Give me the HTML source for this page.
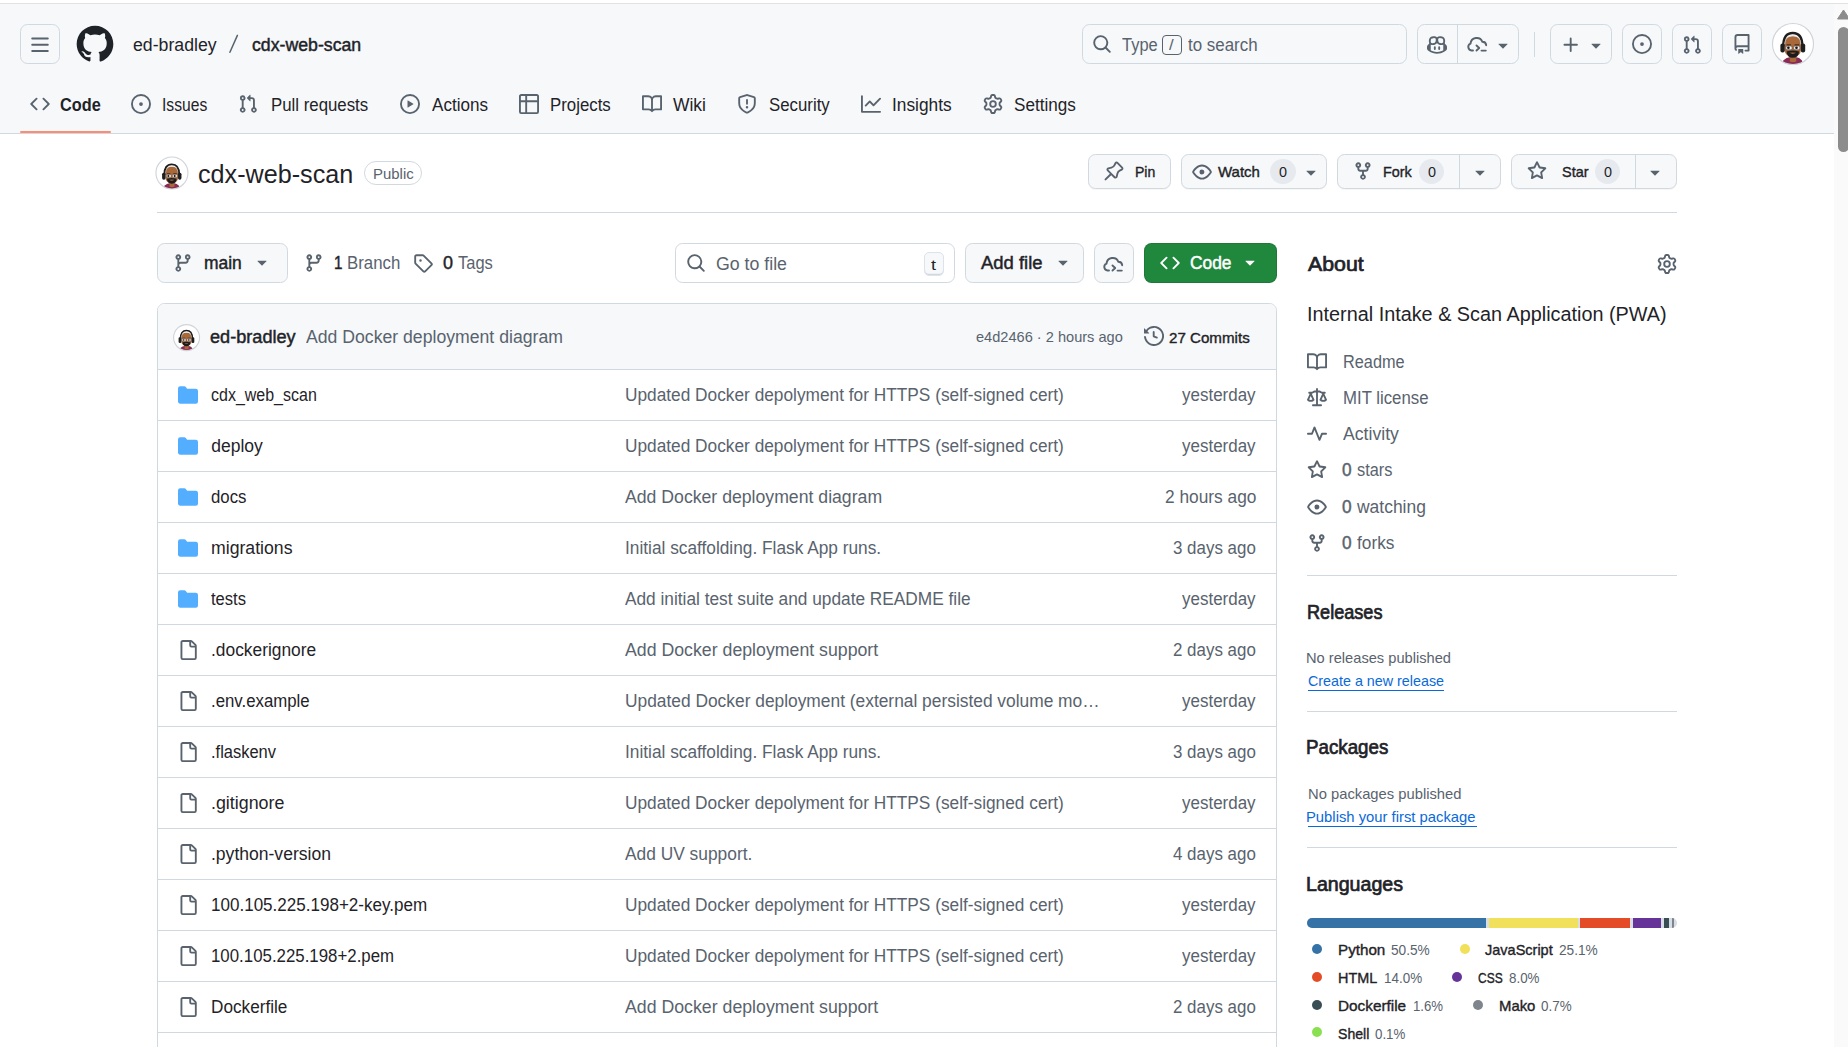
<!DOCTYPE html>
<html><head><meta charset="utf-8"><title>cdx-web-scan</title>
<style>
html,body{margin:0;padding:0;}
body{width:1848px;height:1047px;overflow:hidden;position:relative;background:#fff;font-family:"Liberation Sans",sans-serif;}
.t{position:absolute;white-space:nowrap;line-height:1;}
</style></head><body>
<div style="position:absolute;left:0px;top:3px;width:1848px;height:1px;background:#e1e3e1"></div>
<div style="position:absolute;left:0px;top:4px;width:1834px;height:129px;background:#f6f8fa;border-radius:0px;box-sizing:border-box;"></div>
<div style="position:absolute;left:0px;top:133px;width:1834px;height:1px;background:#d1d9e0"></div>
<div style="position:absolute;left:1834px;top:4px;width:14px;height:1043px;background:#fafafa;border-radius:0px;box-sizing:border-box;"></div>
<svg style="position:absolute;left:1834px;top:0px;overflow:visible" width="14" height="30" viewBox="0 0 14 30"><path d="M3.5 19 L9.5 10 L15.5 19 Z" fill="#8c8c8c" stroke="#8c8c8c" stroke-width="1" stroke-linejoin="round"/></svg>
<div style="position:absolute;left:1838px;top:27px;width:11px;height:125px;background:#8c8c8c;border-radius:5.5px;box-sizing:border-box;"></div>
<div style="position:absolute;left:20px;top:24px;width:40px;height:40px;background:transparent;border:1px solid #d1d9e0;border-radius:7.5px;box-sizing:border-box;"></div>
<svg style="position:absolute;left:30px;top:35px" width="20" height="20" viewBox="0 0 16 16" fill="#59636e"><path d="M1 2.75A.75.75 0 0 1 1.75 2h12.5a.75.75 0 0 1 0 1.5H1.75A.75.75 0 0 1 1 2.75Zm0 5A.75.75 0 0 1 1.75 7h12.5a.75.75 0 0 1 0 1.5H1.75A.75.75 0 0 1 1 7.75ZM1.75 12h12.5a.75.75 0 0 1 0 1.5H1.75a.75.75 0 0 1 0-1.5Z"/></svg>
<svg style="position:absolute;left:75px;top:24px" width="40" height="40" viewBox="0 0 24 24" fill="#1f2328"><path d="M12 1C5.923 1 1 5.923 1 12c0 4.867 3.149 8.979 7.521 10.436.55.096.756-.233.756-.522 0-.262-.013-1.128-.013-2.049-2.764.509-3.479-.674-3.699-1.292-.124-.317-.66-1.293-1.127-1.554-.385-.207-.936-.715-.014-.729.866-.014 1.485.797 1.691 1.128.99 1.663 2.571 1.196 3.204.907.096-.715.385-1.196.701-1.471-2.448-.275-5.005-1.224-5.005-5.432 0-1.196.426-2.186 1.128-2.956-.111-.275-.496-1.402.11-2.915 0 0 .921-.288 3.024 1.128a10.193 10.193 0 0 1 2.75-.371c.936 0 1.871.123 2.75.371 2.104-1.43 3.025-1.128 3.025-1.128.605 1.513.221 2.64.111 2.915.701.77 1.127 1.747 1.127 2.956 0 4.222-2.571 5.157-5.019 5.432.399.344.743 1.004.743 2.035 0 1.471-.014 2.654-.014 3.112 0 .289.206.632.756.522C19.851 20.979 23 16.854 23 12c0-6.077-4.922-11-11-11Z"/></svg>
<svg style="position:absolute;left:225px;top:30px;overflow:visible" width="20" height="30" viewBox="0 0 20 30"><path d="M4.9 22.3 L12.4 5.4" stroke="#59636e" stroke-width="1.5" stroke-linecap="round"/></svg>
<div style="position:absolute;left:1082px;top:24px;width:325px;height:40px;background:#f6f8fa;border:1px solid #d1d9e0;border-radius:7.5px;box-sizing:border-box;"></div>
<svg style="position:absolute;left:1092px;top:34px" width="20" height="20" viewBox="0 0 16 16" fill="#59636e"><path d="M10.68 11.74a6 6 0 0 1-7.922-8.982 6 6 0 0 1 8.982 7.922l3.04 3.04a.749.749 0 0 1-.326 1.275.749.749 0 0 1-.734-.215ZM11.5 7a4.499 4.499 0 1 0-8.997 0A4.499 4.499 0 0 0 11.5 7Z"/></svg>
<div style="position:absolute;left:1162px;top:35px;width:20px;height:20px;background:transparent;border:1px solid #59636e;border-radius:4px;box-sizing:border-box;"></div>
<div style="position:absolute;left:1417px;top:24px;width:102px;height:40px;background:transparent;border:1px solid #d1d9e0;border-radius:7.5px;box-sizing:border-box;"></div>
<div style="position:absolute;left:1457px;top:24px;width:1px;height:40px;background:#d1d9e0"></div>
<svg style="position:absolute;left:1427px;top:35px" width="20" height="20" viewBox="0 0 16 16" fill="#59636e"><path d="M7.998 15.035c-4.562 0-7.873-2.914-7.998-3.749V9.338c.085-.628.677-1.686 1.588-2.065.013-.07.024-.143.036-.218.029-.183.06-.384.126-.612-.201-.508-.254-1.084-.254-1.656 0-.87.128-1.769.693-2.484.579-.733 1.494-1.124 2.724-1.261 1.206-.134 2.262.034 2.944.765.05.053.096.108.139.165.044-.057.094-.112.143-.165.682-.731 1.738-.899 2.944-.765 1.23.137 2.145.528 2.724 1.261.566.715.693 1.614.693 2.484 0 .572-.053 1.148-.254 1.656.066.228.098.429.126.612.012.076.024.148.037.218.924.385 1.522 1.471 1.591 2.095v1.872c0 .766-3.351 3.795-8.002 3.795Zm0-1.485c2.28 0 4.584-1.11 5.002-1.433V7.862l-.023-.116c-.49.21-1.075.291-1.727.291-1.146 0-2.059-.327-2.71-.991A3.222 3.222 0 0 1 8 6.303a3.24 3.24 0 0 1-.544.743c-.65.664-1.563.991-2.71.991-.652 0-1.236-.081-1.727-.291l-.023.116v4.255c.419.323 2.722 1.433 5.002 1.433ZM6.762 2.83c-.193-.206-.637-.413-1.682-.297-1.019.113-1.479.404-1.713.7-.247.312-.369.789-.369 1.554 0 .793.129 1.171.308 1.371.162.181.519.379 1.442.379.853 0 1.339-.235 1.638-.54.315-.322.527-.827.617-1.553.117-.935-.037-1.395-.241-1.614Zm4.155-.297c-1.044-.116-1.488.091-1.681.297-.204.219-.359.679-.242 1.614.091.726.303 1.231.618 1.553.299.305.784.54 1.638.54.922 0 1.28-.198 1.442-.379.179-.2.308-.578.308-1.371 0-.765-.123-1.242-.37-1.554-.233-.296-.693-.587-1.713-.7ZM6.25 9.037a.75.75 0 0 1 .75.75v1.501a.75.75 0 0 1-1.5 0V9.787a.75.75 0 0 1 .75-.75Zm4.25.75v1.501a.75.75 0 0 1-1.5 0V9.787a.75.75 0 0 1 1.5 0Z"/></svg>
<svg style="position:absolute;left:1467px;top:35px;overflow:visible" width="22" height="18" viewBox="0 0 22 18"><g fill="none" stroke="#59636e" stroke-width="1.9" stroke-linecap="round" stroke-linejoin="round"><path d="M6 15.5 H4.5 A3.6 3.6 0 0 1 3.5 8.6 A6.2 6.2 0 0 1 15.4 6.8 A3.8 3.8 0 0 1 19.2 10.2"/><path d="M9.5 10.5 L12.2 13 L9.5 15.5"/><path d="M14.5 15.6 H18.8"/></g></svg>
<svg style="position:absolute;left:1492.8px;top:34.7px" width="20" height="20" viewBox="0 0 16 16" fill="#59636e"><path d="m4.427 7.427 3.396 3.396a.25.25 0 0 0 .354 0l3.396-3.396A.25.25 0 0 0 11.396 7H4.604a.25.25 0 0 0-.177.427Z"/></svg>
<div style="position:absolute;left:1534px;top:32px;width:1px;height:25px;background:#d1d9e0"></div>
<div style="position:absolute;left:1550px;top:24px;width:62px;height:40px;background:transparent;border:1px solid #d1d9e0;border-radius:7.5px;box-sizing:border-box;"></div>
<svg style="position:absolute;left:1561px;top:35px" width="20" height="20" viewBox="0 0 16 16" fill="#59636e"><path d="M7.75 2a.75.75 0 0 1 .75.75V7h4.25a.75.75 0 0 1 0 1.5H8.5v4.25a.75.75 0 0 1-1.5 0V8.5H2.75a.75.75 0 0 1 0-1.5H7V2.75A.75.75 0 0 1 7.75 2Z"/></svg>
<svg style="position:absolute;left:1586px;top:34.7px" width="20" height="20" viewBox="0 0 16 16" fill="#59636e"><path d="m4.427 7.427 3.396 3.396a.25.25 0 0 0 .354 0l3.396-3.396A.25.25 0 0 0 11.396 7H4.604a.25.25 0 0 0-.177.427Z"/></svg>
<div style="position:absolute;left:1622px;top:24px;width:40px;height:40px;background:transparent;border:1px solid #d1d9e0;border-radius:7.5px;box-sizing:border-box;"></div>
<svg style="position:absolute;left:1632px;top:34px" width="20" height="20" viewBox="0 0 16 16" fill="#59636e"><path d="M8 9.5a1.5 1.5 0 1 0 0-3 1.5 1.5 0 0 0 0 3ZM8 0a8 8 0 1 1 0 16A8 8 0 0 1 8 0ZM1.5 8a6.5 6.5 0 1 0 13 0 6.5 6.5 0 0 0-13 0Z"/></svg>
<div style="position:absolute;left:1672px;top:24px;width:40px;height:40px;background:transparent;border:1px solid #d1d9e0;border-radius:7.5px;box-sizing:border-box;"></div>
<svg style="position:absolute;left:1682px;top:35px" width="20" height="20" viewBox="0 0 16 16" fill="#59636e"><path d="M1.5 3.25a2.25 2.25 0 1 1 3 2.122v5.256a2.251 2.251 0 1 1-1.5 0V5.372A2.25 2.25 0 0 1 1.5 3.25Zm5.677-.177L9.573.677A.25.25 0 0 1 10 .854V2.5h1A2.5 2.5 0 0 1 13.5 5v5.628a2.251 2.251 0 1 1-1.5 0V5a1 1 0 0 0-1-1h-1v1.646a.25.25 0 0 1-.427.177L7.177 3.427a.25.25 0 0 1 0-.354ZM3.75 2.5a.75.75 0 1 0 0 1.5.75.75 0 0 0 0-1.5Zm0 9.5a.75.75 0 1 0 0 1.5.75.75 0 0 0 0-1.5Zm8.25.75a.75.75 0 1 0 1.5 0 .75.75 0 0 0-1.5 0Z"/></svg>
<div style="position:absolute;left:1722px;top:24px;width:40px;height:40px;background:transparent;border:1px solid #d1d9e0;border-radius:7.5px;box-sizing:border-box;"></div>
<svg style="position:absolute;left:1732px;top:34px" width="20" height="20" viewBox="0 0 16 16" fill="#59636e"><path d="M2 2.5A2.5 2.5 0 0 1 4.5 0h8.75a.75.75 0 0 1 .75.75v12.5a.75.75 0 0 1-.75.75h-2.5a.75.75 0 0 1 0-1.5h1.75v-2h-8a1 1 0 0 0-.714 1.7.75.75 0 1 1-1.072 1.05A2.495 2.495 0 0 1 2 11.5Zm10.5-1h-8a1 1 0 0 0-1 1v6.708A2.486 2.486 0 0 1 4.5 9h8ZM5 12.25a.25.25 0 0 1 .25-.25h3.5a.25.25 0 0 1 .25.25v3.25a.25.25 0 0 1-.4.2l-1.45-1.087a.249.249 0 0 0-.3 0L5.4 15.7a.25.25 0 0 1-.4-.2Z"/></svg>
<svg style="position:absolute;left:1770.0px;top:21.0px;overflow:visible" width="46.0" height="46.0" viewBox="0 0 46 46"><defs><clipPath id="c1793_44"><circle cx="23" cy="23" r="20.5"/></clipPath></defs>
<circle cx="23" cy="23" r="20.5" fill="#fff"/>
<g clip-path="url(#c1793_44)">
<path d="M13.2 39.5 Q17 36 20 36.2 L26 36.2 Q29 36 32 39.5 L33 46 L12 46 Z" fill="#8b2a55"/>
<path d="M19.8 34 H26.3 V40.5 Q23 42 19.8 40.5 Z" fill="#a8683a"/>
<path d="M14.8 22 Q14.8 15.2 22.8 15.2 Q30.8 15.2 30.8 22 V29 Q30.8 35.5 22.8 35.5 Q14.8 35.5 14.8 29 Z" fill="#a8683a"/>
<path d="M16.6 30.5 Q22.8 28.5 29 30.5 Q28.8 36.8 22.8 36.8 Q16.8 36.8 16.6 30.5 Z M19.5 31.8 Q22.8 34 26.1 31.8 Q22.8 31 19.5 31.8 Z" fill="#1c1c1c" fill-rule="evenodd"/>
<path d="M13.3 25 Q13.3 12 22.8 12 Q32.3 12 32.3 25" fill="none" stroke="#1e1e1e" stroke-width="2.4"/>
<path d="M14.8 23 Q15.5 14.8 22.8 14.3 Q30 14.8 30.8 23" fill="none" stroke="#d8d8d8" stroke-width="0.6"/>
<rect x="10.4" y="22.6" width="4.4" height="9" rx="2" fill="#1e1e1e"/>
<rect x="30.8" y="22.6" width="4.4" height="9" rx="2" fill="#1e1e1e"/>
<path d="M16.6 23.8 H21 M24.6 23.8 H29.2" stroke="#3a2a1e" stroke-width="1"/>
<rect x="15.8" y="25" width="6.2" height="3.8" rx="1.2" fill="#eee" stroke="#5a4a40" stroke-width="0.6"/>
<rect x="23.6" y="25" width="6.2" height="3.8" rx="1.2" fill="#eee" stroke="#5a4a40" stroke-width="0.6"/>
<circle cx="18.4" cy="26.8" r="1.3" fill="#111"/><circle cx="26.5" cy="26.8" r="1.3" fill="#111"/>
</g>
<circle cx="23" cy="23" r="20.5" fill="none" stroke="#d0d4d8" stroke-width="1.122"/></svg>
<svg style="position:absolute;left:30px;top:94px" width="20" height="20" viewBox="0 0 16 16" fill="#59636e"><path d="m11.28 3.22 4.25 4.25a.75.75 0 0 1 0 1.06l-4.25 4.25a.749.749 0 0 1-1.275-.326.749.749 0 0 1 .215-.734L13.94 8l-3.72-3.72a.749.749 0 0 1 .326-1.275.749.749 0 0 1 .734.215Zm-6.56 0a.751.751 0 0 1 1.042.018.751.751 0 0 1 .018 1.042L2.06 8l3.72 3.72a.749.749 0 0 1-.326 1.275.749.749 0 0 1-.734-.215L.47 8.53a.75.75 0 0 1 0-1.06Z"/></svg>
<svg style="position:absolute;left:130.7px;top:94.3px" width="20" height="20" viewBox="0 0 16 16" fill="#59636e"><path d="M8 9.5a1.5 1.5 0 1 0 0-3 1.5 1.5 0 0 0 0 3ZM8 0a8 8 0 1 1 0 16A8 8 0 0 1 8 0ZM1.5 8a6.5 6.5 0 1 0 13 0 6.5 6.5 0 0 0-13 0Z"/></svg>
<svg style="position:absolute;left:238px;top:94.3px" width="20" height="20" viewBox="0 0 16 16" fill="#59636e"><path d="M1.5 3.25a2.25 2.25 0 1 1 3 2.122v5.256a2.251 2.251 0 1 1-1.5 0V5.372A2.25 2.25 0 0 1 1.5 3.25Zm5.677-.177L9.573.677A.25.25 0 0 1 10 .854V2.5h1A2.5 2.5 0 0 1 13.5 5v5.628a2.251 2.251 0 1 1-1.5 0V5a1 1 0 0 0-1-1h-1v1.646a.25.25 0 0 1-.427.177L7.177 3.427a.25.25 0 0 1 0-.354ZM3.75 2.5a.75.75 0 1 0 0 1.5.75.75 0 0 0 0-1.5Zm0 9.5a.75.75 0 1 0 0 1.5.75.75 0 0 0 0-1.5Zm8.25.75a.75.75 0 1 0 1.5 0 .75.75 0 0 0-1.5 0Z"/></svg>
<svg style="position:absolute;left:400px;top:94.3px" width="20" height="20" viewBox="0 0 16 16" fill="#59636e"><path d="M8 0a8 8 0 1 1 0 16A8 8 0 0 1 8 0ZM1.5 8a6.5 6.5 0 1 0 13 0 6.5 6.5 0 0 0-13 0Zm4.879-2.773 4.264 2.559a.25.25 0 0 1 0 .428l-4.264 2.559A.25.25 0 0 1 6 10.559V5.442a.25.25 0 0 1 .379-.215Z"/></svg>
<svg style="position:absolute;left:518.6px;top:94.3px" width="20" height="20" viewBox="0 0 16 16" fill="#59636e"><path d="M0 1.75C0 .784.784 0 1.75 0h12.5C15.216 0 16 .784 16 1.75v12.5A1.75 1.75 0 0 1 14.25 16H1.75A1.75 1.75 0 0 1 0 14.25ZM6.5 6.5v8h7.75a.25.25 0 0 0 .25-.25V6.5Zm8-1.5V1.75a.25.25 0 0 0-.25-.25H6.5V5Zm-13 1.5v7.75c0 .138.112.25.25.25H5v-8ZM5 5V1.5H1.75a.25.25 0 0 0-.25.25V5Z"/></svg>
<svg style="position:absolute;left:641.8px;top:94.3px" width="20" height="20" viewBox="0 0 16 16" fill="#59636e"><path d="M0 1.75A.75.75 0 0 1 .75 1h4.253c1.227 0 2.317.59 3 1.501A3.743 3.743 0 0 1 11.006 1h4.245a.75.75 0 0 1 .75.75v10.5a.75.75 0 0 1-.75.75h-4.507a2.25 2.25 0 0 0-1.591.659l-.622.621a.75.75 0 0 1-1.06 0l-.622-.621A2.25 2.25 0 0 0 5.258 13H.75a.75.75 0 0 1-.75-.75Zm7.251 10.324.004-5.073-.002-2.253A2.25 2.25 0 0 0 5.003 2.5H1.5v9h3.757a3.75 3.75 0 0 1 1.994.574ZM8.755 4.75l-.004 7.322a3.752 3.752 0 0 1 1.992-.572H14.5v-9h-3.495a2.25 2.25 0 0 0-2.25 2.25Z"/></svg>
<svg style="position:absolute;left:736.6px;top:94.3px" width="20" height="20" viewBox="0 0 16 16" fill="#59636e"><path d="M7.467.133a1.748 1.748 0 0 1 1.066 0l5.25 1.68A1.75 1.75 0 0 1 15 3.48V7c0 1.566-.32 3.182-1.303 4.682-.983 1.498-2.585 2.813-5.032 3.855a1.697 1.697 0 0 1-1.33 0c-2.447-1.042-4.049-2.357-5.032-3.855C1.32 10.182 1 8.566 1 7V3.48a1.755 1.755 0 0 1 1.217-1.667Zm.61 1.429a.25.25 0 0 0-.153 0l-5.25 1.68a.25.25 0 0 0-.174.238V7c0 1.358.275 2.666 1.057 3.86.784 1.194 2.121 2.34 4.366 3.297a.196.196 0 0 0 .154 0c2.245-.956 3.582-2.104 4.366-3.298C13.225 9.666 13.5 8.36 13.5 7V3.48a.251.251 0 0 0-.174-.237l-5.25-1.68ZM8.75 4.75v3a.75.75 0 0 1-1.5 0v-3a.75.75 0 0 1 1.5 0ZM9 10.5a1 1 0 1 1-2 0 1 1 0 0 1 2 0Z"/></svg>
<svg style="position:absolute;left:860.7px;top:94.3px" width="20" height="20" viewBox="0 0 16 16" fill="#59636e"><path d="M1.5 1.75V13.5h13.75a.75.75 0 0 1 0 1.5H.75a.75.75 0 0 1-.75-.75V1.75a.75.75 0 0 1 1.5 0Zm14.28 2.53-5.25 5.25a.75.75 0 0 1-1.06 0L7 7.06 4.28 9.78a.751.751 0 0 1-1.042-.018.751.751 0 0 1-.018-1.042l3.25-3.25a.75.75 0 0 1 1.06 0L10 7.94l4.72-4.72a.751.751 0 0 1 1.042.018.751.751 0 0 1 .018 1.042Z"/></svg>
<svg style="position:absolute;left:982.9px;top:94.3px" width="20" height="20" viewBox="0 0 16 16" fill="#59636e"><path d="M8 0a8.2 8.2 0 0 1 .701.031C9.444.095 9.99.645 10.16 1.29l.288 1.107c.018.066.079.158.212.224.231.114.454.243.668.386.123.082.233.09.299.071l1.103-.303c.644-.176 1.392.021 1.82.63.27.385.506.792.704 1.218.315.675.111 1.422-.364 1.891l-.814.806c-.049.048-.098.147-.088.294.016.257.016.515 0 .772-.01.147.038.246.088.294l.814.806c.475.469.679 1.216.364 1.891a7.977 7.977 0 0 1-.704 1.217c-.428.61-1.176.807-1.82.63l-1.102-.302c-.067-.019-.177-.011-.3.071a5.909 5.909 0 0 1-.668.386c-.133.066-.194.158-.211.224l-.29 1.106c-.168.646-.715 1.196-1.458 1.26a8.006 8.006 0 0 1-1.402 0c-.743-.064-1.289-.614-1.458-1.26l-.289-1.106c-.018-.066-.079-.158-.212-.224a5.738 5.738 0 0 1-.668-.386c-.123-.082-.233-.09-.299-.071l-1.103.303c-.644.176-1.392-.021-1.82-.63a8.12 8.12 0 0 1-.704-1.218c-.315-.675-.111-1.422.363-1.891l.815-.806c.05-.048.098-.147.088-.294a6.214 6.214 0 0 1 0-.772c.01-.147-.038-.246-.088-.294l-.815-.806C.635 6.045.431 5.298.746 4.623a7.92 7.92 0 0 1 .704-1.217c.428-.61 1.176-.807 1.82-.63l1.102.302c.067.019.177.011.3-.071.214-.143.437-.272.668-.386.133-.066.194-.158.211-.224l.29-1.106C6.009.645 6.556.095 7.299.03 7.53.01 7.764 0 8 0Zm-.571 1.525c-.036.003-.108.036-.137.146l-.289 1.105c-.147.561-.549.967-.998 1.189-.173.086-.34.183-.5.29-.417.278-.97.423-1.529.27l-1.103-.303c-.109-.03-.175.016-.195.045-.22.312-.412.644-.573.99-.014.031-.021.11.059.19l.815.806c.411.406.562.957.53 1.456a4.709 4.709 0 0 0 0 .582c.032.499-.119 1.05-.53 1.456l-.815.806c-.081.08-.073.159-.059.19.162.346.353.677.573.989.02.03.085.076.195.046l1.102-.303c.56-.153 1.113-.008 1.53.27.161.107.328.204.501.29.447.222.85.629.997 1.189l.289 1.105c.029.109.101.143.137.146a6.6 6.6 0 0 0 1.142 0c.036-.003.108-.036.137-.146l.289-1.105c.147-.561.549-.967.998-1.189.173-.086.34-.183.5-.29.417-.278.97-.423 1.529-.27l1.103.303c.109.029.175-.016.195-.045.22-.313.411-.644.573-.99.014-.031.021-.11-.059-.19l-.815-.806c-.411-.406-.562-.957-.53-1.456a4.709 4.709 0 0 0 0-.582c-.032-.499.119-1.05.53-1.456l.815-.806c.081-.08.073-.159.059-.19a6.464 6.464 0 0 0-.573-.989c-.02-.03-.085-.076-.195-.046l-1.102.303c-.56.153-1.113.008-1.53-.27a4.44 4.44 0 0 0-.501-.29c-.447-.222-.85-.629-.997-1.189l-.289-1.105c-.029-.11-.101-.143-.137-.146a6.6 6.6 0 0 0-1.142 0ZM11 8a3 3 0 1 1-6 0 3 3 0 0 1 6 0ZM9.5 8a1.5 1.5 0 1 0-3.001.001A1.5 1.5 0 0 0 9.5 8Z"/></svg>
<div style="position:absolute;left:20px;top:130.5px;width:91px;height:2.5px;background:#fd8c73;border-radius:2px;box-sizing:border-box;"></div>
<svg style="position:absolute;left:154.0487804878049px;top:155.0487804878049px;overflow:visible" width="35.90243902439025" height="35.90243902439025" viewBox="0 0 46 46"><defs><clipPath id="c172_173"><circle cx="23" cy="23" r="20.5"/></clipPath></defs>
<circle cx="23" cy="23" r="20.5" fill="#fff"/>
<g clip-path="url(#c172_173)">
<path d="M13.2 39.5 Q17 36 20 36.2 L26 36.2 Q29 36 32 39.5 L33 46 L12 46 Z" fill="#8b2a55"/>
<path d="M19.8 34 H26.3 V40.5 Q23 42 19.8 40.5 Z" fill="#a8683a"/>
<path d="M14.8 22 Q14.8 15.2 22.8 15.2 Q30.8 15.2 30.8 22 V29 Q30.8 35.5 22.8 35.5 Q14.8 35.5 14.8 29 Z" fill="#a8683a"/>
<path d="M16.6 30.5 Q22.8 28.5 29 30.5 Q28.8 36.8 22.8 36.8 Q16.8 36.8 16.6 30.5 Z M19.5 31.8 Q22.8 34 26.1 31.8 Q22.8 31 19.5 31.8 Z" fill="#1c1c1c" fill-rule="evenodd"/>
<path d="M13.3 25 Q13.3 12 22.8 12 Q32.3 12 32.3 25" fill="none" stroke="#1e1e1e" stroke-width="2.4"/>
<path d="M14.8 23 Q15.5 14.8 22.8 14.3 Q30 14.8 30.8 23" fill="none" stroke="#d8d8d8" stroke-width="0.6"/>
<rect x="10.4" y="22.6" width="4.4" height="9" rx="2" fill="#1e1e1e"/>
<rect x="30.8" y="22.6" width="4.4" height="9" rx="2" fill="#1e1e1e"/>
<path d="M16.6 23.8 H21 M24.6 23.8 H29.2" stroke="#3a2a1e" stroke-width="1"/>
<rect x="15.8" y="25" width="6.2" height="3.8" rx="1.2" fill="#eee" stroke="#5a4a40" stroke-width="0.6"/>
<rect x="23.6" y="25" width="6.2" height="3.8" rx="1.2" fill="#eee" stroke="#5a4a40" stroke-width="0.6"/>
<circle cx="18.4" cy="26.8" r="1.3" fill="#111"/><circle cx="26.5" cy="26.8" r="1.3" fill="#111"/>
</g>
<circle cx="23" cy="23" r="20.5" fill="none" stroke="#d0d4d8" stroke-width="1.438"/></svg>
<div style="position:absolute;left:364px;top:161px;width:58px;height:24px;background:transparent;border:1px solid #d1d9e0;border-radius:12px;box-sizing:border-box;"></div>
<div style="position:absolute;left:157px;top:212px;width:1520px;height:1px;background:#d1d9e0"></div>
<div style="position:absolute;left:1088px;top:154px;width:83px;height:35px;background:#f6f8fa;border:1px solid #d1d9e0;border-radius:7.5px;box-sizing:border-box;box-shadow:0 1px 0 rgba(31,35,40,0.04)"></div>
<svg style="position:absolute;left:1104px;top:161px" width="20" height="20" viewBox="0 0 16 16" fill="#59636e"><path d="m11.294.984 3.722 3.722a1.75 1.75 0 0 1-.504 2.826l-1.327.613a3.089 3.089 0 0 0-1.707 2.084l-.584 2.454c-.317 1.332-1.972 1.8-2.94.832L5.75 11.311 1.78 15.28a.749.749 0 0 1-1.275-.326.749.749 0 0 1 .215-.734l3.97-3.97-2.204-2.205c-.968-.968-.5-2.623.832-2.94l2.454-.584a3.08 3.08 0 0 0 2.084-1.707l.614-1.327a1.75 1.75 0 0 1 2.826-.504ZM6.283 9.723l2.732 2.731a.25.25 0 0 0 .42-.119l.584-2.454a4.586 4.586 0 0 1 2.537-3.098l1.328-.614a.25.25 0 0 0 .072-.404l-3.722-3.722a.25.25 0 0 0-.404.072l-.614 1.328a4.584 4.584 0 0 1-3.098 2.537l-2.454.584a.25.25 0 0 0-.119.42l2.731 2.732Z"/></svg>
<div style="position:absolute;left:1181px;top:154px;width:146px;height:35px;background:#f6f8fa;border:1px solid #d1d9e0;border-radius:7.5px;box-sizing:border-box;box-shadow:0 1px 0 rgba(31,35,40,0.04)"></div>
<svg style="position:absolute;left:1192px;top:161.5px" width="20" height="20" viewBox="0 0 16 16" fill="#59636e"><path d="M8 2c1.981 0 3.671.992 4.933 2.078 1.27 1.091 2.187 2.345 2.637 3.023a1.62 1.62 0 0 1 0 1.798c-.45.678-1.367 1.932-2.637 3.023C11.67 13.008 9.981 14 8 14c-1.981 0-3.671-.992-4.933-2.078C1.797 10.83.88 9.576.43 8.898a1.62 1.62 0 0 1 0-1.798c.45-.677 1.367-1.931 2.637-3.022C4.33 2.992 6.019 2 8 2ZM1.679 7.932a.12.12 0 0 0 0 .136c.411.622 1.241 1.75 2.366 2.717C5.176 11.758 6.527 12.5 8 12.5c1.473 0 2.825-.742 3.955-1.715 1.124-.967 1.954-2.096 2.366-2.717a.12.12 0 0 0 0-.136c-.412-.621-1.242-1.75-2.366-2.717C10.824 4.242 9.473 3.5 8 3.5c-1.473 0-2.825.742-3.955 1.715-1.124.967-1.954 2.096-2.366 2.717ZM8 10a2 2 0 1 1-.001-3.999A2 2 0 0 1 8 10Z"/></svg>
<div style="position:absolute;left:1270px;top:159px;width:26px;height:25px;background:#e6eaef;border-radius:12.5px;box-sizing:border-box;"></div>
<svg style="position:absolute;left:1300.5px;top:161.5px" width="20" height="20" viewBox="0 0 16 16" fill="#59636e"><path d="m4.427 7.427 3.396 3.396a.25.25 0 0 0 .354 0l3.396-3.396A.25.25 0 0 0 11.396 7H4.604a.25.25 0 0 0-.177.427Z"/></svg>
<div style="position:absolute;left:1337px;top:154px;width:164px;height:35px;background:#f6f8fa;border:1px solid #d1d9e0;border-radius:7.5px;box-sizing:border-box;box-shadow:0 1px 0 rgba(31,35,40,0.04)"></div>
<div style="position:absolute;left:1459px;top:154px;width:1px;height:35px;background:#d1d9e0"></div>
<svg style="position:absolute;left:1352.5px;top:161.2px" width="20" height="20" viewBox="0 0 16 16" fill="#59636e"><path d="M5 5.372v.878c0 .414.336.75.75.75h4.5a.75.75 0 0 0 .75-.75v-.878a2.25 2.25 0 1 1 1.5 0v.878a2.25 2.25 0 0 1-2.25 2.25h-1.5v2.128a2.251 2.251 0 1 1-1.5 0V8.5h-1.5A2.25 2.25 0 0 1 3.5 6.25v-.878a2.25 2.25 0 1 1 1.5 0ZM5 3.25a.75.75 0 1 0-1.5 0 .75.75 0 0 0 1.5 0Zm6.75.75a.75.75 0 1 0 0-1.5.75.75 0 0 0 0 1.5Zm-3 8.75a.75.75 0 1 0-1.5 0 .75.75 0 0 0 1.5 0Z"/></svg>
<div style="position:absolute;left:1419px;top:159px;width:25px;height:25px;background:#e6eaef;border-radius:12.5px;box-sizing:border-box;"></div>
<svg style="position:absolute;left:1469.5px;top:161.5px" width="20" height="20" viewBox="0 0 16 16" fill="#59636e"><path d="m4.427 7.427 3.396 3.396a.25.25 0 0 0 .354 0l3.396-3.396A.25.25 0 0 0 11.396 7H4.604a.25.25 0 0 0-.177.427Z"/></svg>
<div style="position:absolute;left:1511px;top:154px;width:166px;height:35px;background:#f6f8fa;border:1px solid #d1d9e0;border-radius:7.5px;box-sizing:border-box;box-shadow:0 1px 0 rgba(31,35,40,0.04)"></div>
<div style="position:absolute;left:1635px;top:154px;width:1px;height:35px;background:#d1d9e0"></div>
<svg style="position:absolute;left:1527px;top:161.3px" width="20" height="20" viewBox="0 0 16 16" fill="#59636e"><path d="M8 .25a.75.75 0 0 1 .673.418l1.882 3.815 4.21.612a.75.75 0 0 1 .416 1.279l-3.046 2.97.719 4.192a.751.751 0 0 1-1.088.791L8 12.347l-3.766 1.98a.75.75 0 0 1-1.088-.79l.72-4.194L.818 6.374a.75.75 0 0 1 .416-1.28l4.21-.611L7.327.668A.75.75 0 0 1 8 .25Zm0 2.445L6.615 5.5a.75.75 0 0 1-.564.41l-3.097.45 2.24 2.184a.75.75 0 0 1 .216.664l-.528 3.084 2.769-1.456a.75.75 0 0 1 .698 0l2.77 1.456-.53-3.084a.75.75 0 0 1 .216-.664l2.24-2.183-3.096-.45a.75.75 0 0 1-.564-.41L8 2.694Z"/></svg>
<div style="position:absolute;left:1595px;top:159px;width:25px;height:25px;background:#e6eaef;border-radius:12.5px;box-sizing:border-box;"></div>
<svg style="position:absolute;left:1645px;top:161.5px" width="20" height="20" viewBox="0 0 16 16" fill="#59636e"><path d="m4.427 7.427 3.396 3.396a.25.25 0 0 0 .354 0l3.396-3.396A.25.25 0 0 0 11.396 7H4.604a.25.25 0 0 0-.177.427Z"/></svg>
<div style="position:absolute;left:157px;top:243px;width:131px;height:40px;background:#f6f8fa;border:1px solid #d1d9e0;border-radius:7.5px;box-sizing:border-box;"></div>
<svg style="position:absolute;left:173.4px;top:252.8px" width="20" height="20" viewBox="0 0 16 16" fill="#59636e"><path d="M9.5 3.25a2.25 2.25 0 1 1 3 2.122V6A2.5 2.5 0 0 1 10 8.5H6a1 1 0 0 0-1 1v1.128a2.251 2.251 0 1 1-1.5 0V5.372a2.25 2.25 0 1 1 1.5 0v1.836A2.493 2.493 0 0 1 6 7h4a1 1 0 0 0 1-1v-.628A2.25 2.25 0 0 1 9.5 3.25Zm-6 0a.75.75 0 1 0 1.5 0 .75.75 0 0 0-1.5 0Zm8.25-.75a.75.75 0 1 0 0 1.5.75.75 0 0 0 0-1.5ZM4.25 12a.75.75 0 1 0 0 1.5.75.75 0 0 0 0-1.5Z"/></svg>
<svg style="position:absolute;left:251.8px;top:252.3px" width="20" height="20" viewBox="0 0 16 16" fill="#59636e"><path d="m4.427 7.427 3.396 3.396a.25.25 0 0 0 .354 0l3.396-3.396A.25.25 0 0 0 11.396 7H4.604a.25.25 0 0 0-.177.427Z"/></svg>
<svg style="position:absolute;left:304px;top:252.8px" width="20" height="20" viewBox="0 0 16 16" fill="#59636e"><path d="M9.5 3.25a2.25 2.25 0 1 1 3 2.122V6A2.5 2.5 0 0 1 10 8.5H6a1 1 0 0 0-1 1v1.128a2.251 2.251 0 1 1-1.5 0V5.372a2.25 2.25 0 1 1 1.5 0v1.836A2.493 2.493 0 0 1 6 7h4a1 1 0 0 0 1-1v-.628A2.25 2.25 0 0 1 9.5 3.25Zm-6 0a.75.75 0 1 0 1.5 0 .75.75 0 0 0-1.5 0Zm8.25-.75a.75.75 0 1 0 0 1.5.75.75 0 0 0 0-1.5ZM4.25 12a.75.75 0 1 0 0 1.5.75.75 0 0 0 0-1.5Z"/></svg>
<svg style="position:absolute;left:412.7px;top:253px" width="20" height="20" viewBox="0 0 16 16" fill="#59636e"><path d="M1 7.775V2.75C1 1.784 1.784 1 2.75 1h5.025c.464 0 .91.184 1.238.513l6.25 6.25a1.75 1.75 0 0 1 0 2.474l-5.026 5.026a1.75 1.75 0 0 1-2.474 0l-6.25-6.25A1.752 1.752 0 0 1 1 7.775Zm1.5 0c0 .066.026.13.073.177l6.25 6.25a.25.25 0 0 0 .354 0l5.025-5.025a.25.25 0 0 0 0-.354l-6.25-6.25a.25.25 0 0 0-.177-.073H2.75a.25.25 0 0 0-.25.25ZM6 5a1 1 0 1 1 0 2 1 1 0 0 1 0-2Z"/></svg>
<div style="position:absolute;left:675px;top:243px;width:280px;height:40px;background:#fff;border:1px solid #d1d9e0;border-radius:7.5px;box-sizing:border-box;"></div>
<svg style="position:absolute;left:686px;top:253px" width="20" height="20" viewBox="0 0 16 16" fill="#59636e"><path d="M10.68 11.74a6 6 0 0 1-7.922-8.982 6 6 0 0 1 8.982 7.922l3.04 3.04a.749.749 0 0 1-.326 1.275.749.749 0 0 1-.734-.215ZM11.5 7a4.499 4.499 0 1 0-8.997 0A4.499 4.499 0 0 0 11.5 7Z"/></svg>
<div style="position:absolute;left:924px;top:252px;width:20px;height:24px;background:#f6f8fa;border:1px solid #dde3e8;border-radius:5px;box-sizing:border-box;box-shadow:inset 0 -1.2px 0 #d1d9e0"></div>
<div style="position:absolute;left:965px;top:243px;width:119px;height:40px;background:#f6f8fa;border:1px solid #d1d9e0;border-radius:7.5px;box-sizing:border-box;"></div>
<svg style="position:absolute;left:1052.5px;top:252.3px" width="20" height="20" viewBox="0 0 16 16" fill="#59636e"><path d="m4.427 7.427 3.396 3.396a.25.25 0 0 0 .354 0l3.396-3.396A.25.25 0 0 0 11.396 7H4.604a.25.25 0 0 0-.177.427Z"/></svg>
<div style="position:absolute;left:1094px;top:243px;width:40px;height:40px;background:#f6f8fa;border:1px solid #d1d9e0;border-radius:7.5px;box-sizing:border-box;"></div>
<svg style="position:absolute;left:1103px;top:255px;overflow:visible" width="22" height="18" viewBox="0 0 22 18"><g fill="none" stroke="#59636e" stroke-width="1.9" stroke-linecap="round" stroke-linejoin="round"><path d="M6 15.5 H4.5 A3.6 3.6 0 0 1 3.5 8.6 A6.2 6.2 0 0 1 15.4 6.8 A3.8 3.8 0 0 1 19.2 10.2"/><path d="M9.5 10.5 L12.2 13 L9.5 15.5"/><path d="M14.5 15.6 H18.8"/></g></svg>
<div style="position:absolute;left:1144px;top:243px;width:133px;height:40px;background:#1f883d;border:1px solid rgba(31,35,40,0.15);border-radius:7.5px;box-sizing:border-box;"></div>
<svg style="position:absolute;left:1160.2px;top:253px" width="20" height="20" viewBox="0 0 16 16" fill="#fff"><path d="m11.28 3.22 4.25 4.25a.75.75 0 0 1 0 1.06l-4.25 4.25a.749.749 0 0 1-1.275-.326.749.749 0 0 1 .215-.734L13.94 8l-3.72-3.72a.749.749 0 0 1 .326-1.275.749.749 0 0 1 .734.215Zm-6.56 0a.751.751 0 0 1 1.042.018.751.751 0 0 1 .018 1.042L2.06 8l3.72 3.72a.749.749 0 0 1-.326 1.275.749.749 0 0 1-.734-.215L.47 8.53a.75.75 0 0 1 0-1.06Z"/></svg>
<svg style="position:absolute;left:1240.2px;top:252.3px" width="20" height="20" viewBox="0 0 16 16" fill="#fff"><path d="m4.427 7.427 3.396 3.396a.25.25 0 0 0 .354 0l3.396-3.396A.25.25 0 0 0 11.396 7H4.604a.25.25 0 0 0-.177.427Z"/></svg>
<div style="position:absolute;left:157px;top:303px;width:1120px;height:760px;background:#fff;border:1px solid #d1d9e0;border-radius:7.5px;box-sizing:border-box;"></div>
<div style="position:absolute;left:158px;top:304px;width:1118px;height:65px;background:#f6f8fa;border-radius:6.5px 6.5px 0 0"></div>
<div style="position:absolute;left:158px;top:369px;width:1118px;height:1px;background:#d1d9e0"></div>
<svg style="position:absolute;left:171.71463414634147px;top:322.6146341463415px;overflow:visible" width="29.170731707317074" height="29.170731707317074" viewBox="0 0 46 46"><defs><clipPath id="c186_337"><circle cx="23" cy="23" r="20.5"/></clipPath></defs>
<circle cx="23" cy="23" r="20.5" fill="#fff"/>
<g clip-path="url(#c186_337)">
<path d="M13.2 39.5 Q17 36 20 36.2 L26 36.2 Q29 36 32 39.5 L33 46 L12 46 Z" fill="#8b2a55"/>
<path d="M19.8 34 H26.3 V40.5 Q23 42 19.8 40.5 Z" fill="#a8683a"/>
<path d="M14.8 22 Q14.8 15.2 22.8 15.2 Q30.8 15.2 30.8 22 V29 Q30.8 35.5 22.8 35.5 Q14.8 35.5 14.8 29 Z" fill="#a8683a"/>
<path d="M16.6 30.5 Q22.8 28.5 29 30.5 Q28.8 36.8 22.8 36.8 Q16.8 36.8 16.6 30.5 Z M19.5 31.8 Q22.8 34 26.1 31.8 Q22.8 31 19.5 31.8 Z" fill="#1c1c1c" fill-rule="evenodd"/>
<path d="M13.3 25 Q13.3 12 22.8 12 Q32.3 12 32.3 25" fill="none" stroke="#1e1e1e" stroke-width="2.4"/>
<path d="M14.8 23 Q15.5 14.8 22.8 14.3 Q30 14.8 30.8 23" fill="none" stroke="#d8d8d8" stroke-width="0.6"/>
<rect x="10.4" y="22.6" width="4.4" height="9" rx="2" fill="#1e1e1e"/>
<rect x="30.8" y="22.6" width="4.4" height="9" rx="2" fill="#1e1e1e"/>
<path d="M16.6 23.8 H21 M24.6 23.8 H29.2" stroke="#3a2a1e" stroke-width="1"/>
<rect x="15.8" y="25" width="6.2" height="3.8" rx="1.2" fill="#eee" stroke="#5a4a40" stroke-width="0.6"/>
<rect x="23.6" y="25" width="6.2" height="3.8" rx="1.2" fill="#eee" stroke="#5a4a40" stroke-width="0.6"/>
<circle cx="18.4" cy="26.8" r="1.3" fill="#111"/><circle cx="26.5" cy="26.8" r="1.3" fill="#111"/>
</g>
<circle cx="23" cy="23" r="20.5" fill="none" stroke="#d0d4d8" stroke-width="1.769"/></svg>
<svg style="position:absolute;left:1144px;top:325.5px" width="20" height="20" viewBox="0 0 16 16" fill="#59636e"><path d="m.427 1.927 1.215 1.215a8.002 8.002 0 1 1-1.6 5.685.75.75 0 1 1 1.493-.154 6.5 6.5 0 1 0 1.18-4.458l1.358 1.358A.25.25 0 0 1 3.896 6H.25A.25.25 0 0 1 0 5.75V2.104a.25.25 0 0 1 .427-.177ZM7.75 4a.75.75 0 0 1 .75.75v2.992l2.028.812a.75.75 0 0 1-.557 1.392l-2.5-1A.751.751 0 0 1 7 8.25v-3.5A.75.75 0 0 1 7.75 4Z"/></svg>
<svg style="position:absolute;left:178px;top:384.8px" width="20" height="20" viewBox="0 0 16 16" fill="#54aeff"><path d="M1.75 1A1.75 1.75 0 0 0 0 2.75v10.5C0 14.216.784 15 1.75 15h12.5A1.75 1.75 0 0 0 16 13.25v-8.5A1.75 1.75 0 0 0 14.25 3H7.5a.25.25 0 0 1-.2-.1l-.9-1.2C6.07 1.26 5.55 1 5 1H1.75Z"/></svg>
<div style="position:absolute;left:158px;top:420px;width:1118px;height:1px;background:#d1d9e0"></div>
<svg style="position:absolute;left:178px;top:435.8px" width="20" height="20" viewBox="0 0 16 16" fill="#54aeff"><path d="M1.75 1A1.75 1.75 0 0 0 0 2.75v10.5C0 14.216.784 15 1.75 15h12.5A1.75 1.75 0 0 0 16 13.25v-8.5A1.75 1.75 0 0 0 14.25 3H7.5a.25.25 0 0 1-.2-.1l-.9-1.2C6.07 1.26 5.55 1 5 1H1.75Z"/></svg>
<div style="position:absolute;left:158px;top:471px;width:1118px;height:1px;background:#d1d9e0"></div>
<svg style="position:absolute;left:178px;top:486.8px" width="20" height="20" viewBox="0 0 16 16" fill="#54aeff"><path d="M1.75 1A1.75 1.75 0 0 0 0 2.75v10.5C0 14.216.784 15 1.75 15h12.5A1.75 1.75 0 0 0 16 13.25v-8.5A1.75 1.75 0 0 0 14.25 3H7.5a.25.25 0 0 1-.2-.1l-.9-1.2C6.07 1.26 5.55 1 5 1H1.75Z"/></svg>
<div style="position:absolute;left:158px;top:522px;width:1118px;height:1px;background:#d1d9e0"></div>
<svg style="position:absolute;left:178px;top:537.8px" width="20" height="20" viewBox="0 0 16 16" fill="#54aeff"><path d="M1.75 1A1.75 1.75 0 0 0 0 2.75v10.5C0 14.216.784 15 1.75 15h12.5A1.75 1.75 0 0 0 16 13.25v-8.5A1.75 1.75 0 0 0 14.25 3H7.5a.25.25 0 0 1-.2-.1l-.9-1.2C6.07 1.26 5.55 1 5 1H1.75Z"/></svg>
<div style="position:absolute;left:158px;top:573px;width:1118px;height:1px;background:#d1d9e0"></div>
<svg style="position:absolute;left:178px;top:588.8px" width="20" height="20" viewBox="0 0 16 16" fill="#54aeff"><path d="M1.75 1A1.75 1.75 0 0 0 0 2.75v10.5C0 14.216.784 15 1.75 15h12.5A1.75 1.75 0 0 0 16 13.25v-8.5A1.75 1.75 0 0 0 14.25 3H7.5a.25.25 0 0 1-.2-.1l-.9-1.2C6.07 1.26 5.55 1 5 1H1.75Z"/></svg>
<div style="position:absolute;left:158px;top:624px;width:1118px;height:1px;background:#d1d9e0"></div>
<svg style="position:absolute;left:178.2px;top:640.0px" width="20" height="20" viewBox="0 0 16 16" fill="#59636e"><path d="M2 1.75C2 .784 2.784 0 3.75 0h6.586c.464 0 .909.184 1.237.513l2.914 2.914c.329.328.513.773.513 1.237v9.586A1.75 1.75 0 0 1 13.25 16h-9.5A1.75 1.75 0 0 1 2 14.25Zm1.75-.25a.25.25 0 0 0-.25.25v12.5c0 .138.112.25.25.25h9.5a.25.25 0 0 0 .25-.25V6h-2.75A1.75 1.75 0 0 1 9 4.25V1.5Zm6.75.062V4.25c0 .138.112.25.25.25h2.688l-.011-.013-2.914-2.914-.013-.011Z"/></svg>
<div style="position:absolute;left:158px;top:675px;width:1118px;height:1px;background:#d1d9e0"></div>
<svg style="position:absolute;left:178.2px;top:691.0px" width="20" height="20" viewBox="0 0 16 16" fill="#59636e"><path d="M2 1.75C2 .784 2.784 0 3.75 0h6.586c.464 0 .909.184 1.237.513l2.914 2.914c.329.328.513.773.513 1.237v9.586A1.75 1.75 0 0 1 13.25 16h-9.5A1.75 1.75 0 0 1 2 14.25Zm1.75-.25a.25.25 0 0 0-.25.25v12.5c0 .138.112.25.25.25h9.5a.25.25 0 0 0 .25-.25V6h-2.75A1.75 1.75 0 0 1 9 4.25V1.5Zm6.75.062V4.25c0 .138.112.25.25.25h2.688l-.011-.013-2.914-2.914-.013-.011Z"/></svg>
<div style="position:absolute;left:158px;top:726px;width:1118px;height:1px;background:#d1d9e0"></div>
<svg style="position:absolute;left:178.2px;top:742.0px" width="20" height="20" viewBox="0 0 16 16" fill="#59636e"><path d="M2 1.75C2 .784 2.784 0 3.75 0h6.586c.464 0 .909.184 1.237.513l2.914 2.914c.329.328.513.773.513 1.237v9.586A1.75 1.75 0 0 1 13.25 16h-9.5A1.75 1.75 0 0 1 2 14.25Zm1.75-.25a.25.25 0 0 0-.25.25v12.5c0 .138.112.25.25.25h9.5a.25.25 0 0 0 .25-.25V6h-2.75A1.75 1.75 0 0 1 9 4.25V1.5Zm6.75.062V4.25c0 .138.112.25.25.25h2.688l-.011-.013-2.914-2.914-.013-.011Z"/></svg>
<div style="position:absolute;left:158px;top:777px;width:1118px;height:1px;background:#d1d9e0"></div>
<svg style="position:absolute;left:178.2px;top:793.0px" width="20" height="20" viewBox="0 0 16 16" fill="#59636e"><path d="M2 1.75C2 .784 2.784 0 3.75 0h6.586c.464 0 .909.184 1.237.513l2.914 2.914c.329.328.513.773.513 1.237v9.586A1.75 1.75 0 0 1 13.25 16h-9.5A1.75 1.75 0 0 1 2 14.25Zm1.75-.25a.25.25 0 0 0-.25.25v12.5c0 .138.112.25.25.25h9.5a.25.25 0 0 0 .25-.25V6h-2.75A1.75 1.75 0 0 1 9 4.25V1.5Zm6.75.062V4.25c0 .138.112.25.25.25h2.688l-.011-.013-2.914-2.914-.013-.011Z"/></svg>
<div style="position:absolute;left:158px;top:828px;width:1118px;height:1px;background:#d1d9e0"></div>
<svg style="position:absolute;left:178.2px;top:844.0px" width="20" height="20" viewBox="0 0 16 16" fill="#59636e"><path d="M2 1.75C2 .784 2.784 0 3.75 0h6.586c.464 0 .909.184 1.237.513l2.914 2.914c.329.328.513.773.513 1.237v9.586A1.75 1.75 0 0 1 13.25 16h-9.5A1.75 1.75 0 0 1 2 14.25Zm1.75-.25a.25.25 0 0 0-.25.25v12.5c0 .138.112.25.25.25h9.5a.25.25 0 0 0 .25-.25V6h-2.75A1.75 1.75 0 0 1 9 4.25V1.5Zm6.75.062V4.25c0 .138.112.25.25.25h2.688l-.011-.013-2.914-2.914-.013-.011Z"/></svg>
<div style="position:absolute;left:158px;top:879px;width:1118px;height:1px;background:#d1d9e0"></div>
<svg style="position:absolute;left:178.2px;top:895.0px" width="20" height="20" viewBox="0 0 16 16" fill="#59636e"><path d="M2 1.75C2 .784 2.784 0 3.75 0h6.586c.464 0 .909.184 1.237.513l2.914 2.914c.329.328.513.773.513 1.237v9.586A1.75 1.75 0 0 1 13.25 16h-9.5A1.75 1.75 0 0 1 2 14.25Zm1.75-.25a.25.25 0 0 0-.25.25v12.5c0 .138.112.25.25.25h9.5a.25.25 0 0 0 .25-.25V6h-2.75A1.75 1.75 0 0 1 9 4.25V1.5Zm6.75.062V4.25c0 .138.112.25.25.25h2.688l-.011-.013-2.914-2.914-.013-.011Z"/></svg>
<div style="position:absolute;left:158px;top:930px;width:1118px;height:1px;background:#d1d9e0"></div>
<svg style="position:absolute;left:178.2px;top:946.0px" width="20" height="20" viewBox="0 0 16 16" fill="#59636e"><path d="M2 1.75C2 .784 2.784 0 3.75 0h6.586c.464 0 .909.184 1.237.513l2.914 2.914c.329.328.513.773.513 1.237v9.586A1.75 1.75 0 0 1 13.25 16h-9.5A1.75 1.75 0 0 1 2 14.25Zm1.75-.25a.25.25 0 0 0-.25.25v12.5c0 .138.112.25.25.25h9.5a.25.25 0 0 0 .25-.25V6h-2.75A1.75 1.75 0 0 1 9 4.25V1.5Zm6.75.062V4.25c0 .138.112.25.25.25h2.688l-.011-.013-2.914-2.914-.013-.011Z"/></svg>
<div style="position:absolute;left:158px;top:981px;width:1118px;height:1px;background:#d1d9e0"></div>
<svg style="position:absolute;left:178.2px;top:997.0px" width="20" height="20" viewBox="0 0 16 16" fill="#59636e"><path d="M2 1.75C2 .784 2.784 0 3.75 0h6.586c.464 0 .909.184 1.237.513l2.914 2.914c.329.328.513.773.513 1.237v9.586A1.75 1.75 0 0 1 13.25 16h-9.5A1.75 1.75 0 0 1 2 14.25Zm1.75-.25a.25.25 0 0 0-.25.25v12.5c0 .138.112.25.25.25h9.5a.25.25 0 0 0 .25-.25V6h-2.75A1.75 1.75 0 0 1 9 4.25V1.5Zm6.75.062V4.25c0 .138.112.25.25.25h2.688l-.011-.013-2.914-2.914-.013-.011Z"/></svg>
<div style="position:absolute;left:158px;top:1032px;width:1118px;height:1px;background:#d1d9e0"></div>
<svg style="position:absolute;left:178.2px;top:1048.0px" width="20" height="20" viewBox="0 0 16 16" fill="#59636e"><path d="M2 1.75C2 .784 2.784 0 3.75 0h6.586c.464 0 .909.184 1.237.513l2.914 2.914c.329.328.513.773.513 1.237v9.586A1.75 1.75 0 0 1 13.25 16h-9.5A1.75 1.75 0 0 1 2 14.25Zm1.75-.25a.25.25 0 0 0-.25.25v12.5c0 .138.112.25.25.25h9.5a.25.25 0 0 0 .25-.25V6h-2.75A1.75 1.75 0 0 1 9 4.25V1.5Zm6.75.062V4.25c0 .138.112.25.25.25h2.688l-.011-.013-2.914-2.914-.013-.011Z"/></svg>
<svg style="position:absolute;left:1657px;top:254px" width="20" height="20" viewBox="0 0 16 16" fill="#59636e"><path d="M8 0a8.2 8.2 0 0 1 .701.031C9.444.095 9.99.645 10.16 1.29l.288 1.107c.018.066.079.158.212.224.231.114.454.243.668.386.123.082.233.09.299.071l1.103-.303c.644-.176 1.392.021 1.82.63.27.385.506.792.704 1.218.315.675.111 1.422-.364 1.891l-.814.806c-.049.048-.098.147-.088.294.016.257.016.515 0 .772-.01.147.038.246.088.294l.814.806c.475.469.679 1.216.364 1.891a7.977 7.977 0 0 1-.704 1.217c-.428.61-1.176.807-1.82.63l-1.102-.302c-.067-.019-.177-.011-.3.071a5.909 5.909 0 0 1-.668.386c-.133.066-.194.158-.211.224l-.29 1.106c-.168.646-.715 1.196-1.458 1.26a8.006 8.006 0 0 1-1.402 0c-.743-.064-1.289-.614-1.458-1.26l-.289-1.106c-.018-.066-.079-.158-.212-.224a5.738 5.738 0 0 1-.668-.386c-.123-.082-.233-.09-.299-.071l-1.103.303c-.644.176-1.392-.021-1.82-.63a8.12 8.12 0 0 1-.704-1.218c-.315-.675-.111-1.422.363-1.891l.815-.806c.05-.048.098-.147.088-.294a6.214 6.214 0 0 1 0-.772c.01-.147-.038-.246-.088-.294l-.815-.806C.635 6.045.431 5.298.746 4.623a7.92 7.92 0 0 1 .704-1.217c.428-.61 1.176-.807 1.82-.63l1.102.302c.067.019.177.011.3-.071.214-.143.437-.272.668-.386.133-.066.194-.158.211-.224l.29-1.106C6.009.645 6.556.095 7.299.03 7.53.01 7.764 0 8 0Zm-.571 1.525c-.036.003-.108.036-.137.146l-.289 1.105c-.147.561-.549.967-.998 1.189-.173.086-.34.183-.5.29-.417.278-.97.423-1.529.27l-1.103-.303c-.109-.03-.175.016-.195.045-.22.312-.412.644-.573.99-.014.031-.021.11.059.19l.815.806c.411.406.562.957.53 1.456a4.709 4.709 0 0 0 0 .582c.032.499-.119 1.05-.53 1.456l-.815.806c-.081.08-.073.159-.059.19.162.346.353.677.573.989.02.03.085.076.195.046l1.102-.303c.56-.153 1.113-.008 1.53.27.161.107.328.204.501.29.447.222.85.629.997 1.189l.289 1.105c.029.109.101.143.137.146a6.6 6.6 0 0 0 1.142 0c.036-.003.108-.036.137-.146l.289-1.105c.147-.561.549-.967.998-1.189.173-.086.34-.183.5-.29.417-.278.97-.423 1.529-.27l1.103.303c.109.029.175-.016.195-.045.22-.313.411-.644.573-.99.014-.031.021-.11-.059-.19l-.815-.806c-.411-.406-.562-.957-.53-1.456a4.709 4.709 0 0 0 0-.582c-.032-.499.119-1.05.53-1.456l.815-.806c.081-.08.073-.159.059-.19a6.464 6.464 0 0 0-.573-.989c-.02-.03-.085-.076-.195-.046l-1.102.303c-.56.153-1.113.008-1.53-.27a4.44 4.44 0 0 0-.501-.29c-.447-.222-.85-.629-.997-1.189l-.289-1.105c-.029-.11-.101-.143-.137-.146a6.6 6.6 0 0 0-1.142 0ZM11 8a3 3 0 1 1-6 0 3 3 0 0 1 6 0ZM9.5 8a1.5 1.5 0 1 0-3.001.001A1.5 1.5 0 0 0 9.5 8Z"/></svg>
<svg style="position:absolute;left:1307px;top:351.8px" width="20" height="20" viewBox="0 0 16 16" fill="#59636e"><path d="M0 1.75A.75.75 0 0 1 .75 1h4.253c1.227 0 2.317.59 3 1.501A3.743 3.743 0 0 1 11.006 1h4.245a.75.75 0 0 1 .75.75v10.5a.75.75 0 0 1-.75.75h-4.507a2.25 2.25 0 0 0-1.591.659l-.622.621a.75.75 0 0 1-1.06 0l-.622-.621A2.25 2.25 0 0 0 5.258 13H.75a.75.75 0 0 1-.75-.75Zm7.251 10.324.004-5.073-.002-2.253A2.25 2.25 0 0 0 5.003 2.5H1.5v9h3.757a3.75 3.75 0 0 1 1.994.574ZM8.755 4.75l-.004 7.322a3.752 3.752 0 0 1 1.992-.572H14.5v-9h-3.495a2.25 2.25 0 0 0-2.25 2.25Z"/></svg>
<svg style="position:absolute;left:1307px;top:387.9px" width="20" height="20" viewBox="0 0 16 16" fill="#59636e"><path d="M8.75.75V2h.985c.304 0 .603.08.867.231l1.29.736c.038.022.08.033.124.033h2.234a.75.75 0 0 1 0 1.5h-.427l2.111 4.692a.75.75 0 0 1-.154.838l-.53-.53.529.531-.001.002-.002.002-.006.006-.006.005-.01.01-.045.04c-.21.176-.441.327-.686.45C14.556 10.78 13.88 11 13 11a4.498 4.498 0 0 1-2.023-.454 3.544 3.544 0 0 1-.686-.45l-.045-.04-.016-.015-.006-.006-.004-.004v-.001a.75.75 0 0 1-.154-.838L12.178 4.5h-.162c-.305 0-.604-.079-.868-.231l-1.29-.736a.245.245 0 0 0-.124-.033H8.75V13h2.5a.75.75 0 0 1 0 1.5h-6.5a.75.75 0 0 1 0-1.5h2.5V3.5h-.984a.245.245 0 0 0-.124.033l-1.289.737c-.265.15-.564.23-.869.23h-.162l2.112 4.692a.75.75 0 0 1-.154.838l-.53-.53.529.531-.001.002-.002.002-.006.006-.016.015-.045.04c-.21.176-.441.327-.686.45C4.556 10.78 3.88 11 3 11a4.498 4.498 0 0 1-2.023-.454 3.544 3.544 0 0 1-.686-.45l-.045-.04-.016-.015-.006-.006-.004-.004v-.001a.75.75 0 0 1-.154-.838L2.178 4.5H1.75a.75.75 0 0 1 0-1.5h2.234a.249.249 0 0 0 .125-.033l1.288-.737c.265-.15.564-.23.869-.23h.984V.75a.75.75 0 0 1 1.5 0Zm2.945 8.477c.285.135.718.273 1.305.273s1.02-.138 1.305-.273L13 6.327Zm-10 0c.285.135.718.273 1.305.273s1.02-.138 1.305-.273L3 6.327Z"/></svg>
<svg style="position:absolute;left:1307px;top:424px" width="20" height="20" viewBox="0 0 16 16" fill="#59636e"><path d="M6 2c.306 0 .582.187.696.471L10 10.731l1.304-3.26A.751.751 0 0 1 12 7h3.25a.75.75 0 0 1 0 1.5h-2.742l-1.812 4.528a.751.751 0 0 1-1.392 0L6 4.77 4.696 8.03A.75.75 0 0 1 4 8.5H.75a.75.75 0 0 1 0-1.5h2.742l1.812-4.529A.751.751 0 0 1 6 2Z"/></svg>
<svg style="position:absolute;left:1307px;top:460.3px" width="20" height="20" viewBox="0 0 16 16" fill="#59636e"><path d="M8 .25a.75.75 0 0 1 .673.418l1.882 3.815 4.21.612a.75.75 0 0 1 .416 1.279l-3.046 2.97.719 4.192a.751.751 0 0 1-1.088.791L8 12.347l-3.766 1.98a.75.75 0 0 1-1.088-.79l.72-4.194L.818 6.374a.75.75 0 0 1 .416-1.28l4.21-.611L7.327.668A.75.75 0 0 1 8 .25Zm0 2.445L6.615 5.5a.75.75 0 0 1-.564.41l-3.097.45 2.24 2.184a.75.75 0 0 1 .216.664l-.528 3.084 2.769-1.456a.75.75 0 0 1 .698 0l2.77 1.456-.53-3.084a.75.75 0 0 1 .216-.664l2.24-2.183-3.096-.45a.75.75 0 0 1-.564-.41L8 2.694Z"/></svg>
<svg style="position:absolute;left:1307px;top:496.79999999999995px" width="20" height="20" viewBox="0 0 16 16" fill="#59636e"><path d="M8 2c1.981 0 3.671.992 4.933 2.078 1.27 1.091 2.187 2.345 2.637 3.023a1.62 1.62 0 0 1 0 1.798c-.45.678-1.367 1.932-2.637 3.023C11.67 13.008 9.981 14 8 14c-1.981 0-3.671-.992-4.933-2.078C1.797 10.83.88 9.576.43 8.898a1.62 1.62 0 0 1 0-1.798c.45-.677 1.367-1.931 2.637-3.022C4.33 2.992 6.019 2 8 2ZM1.679 7.932a.12.12 0 0 0 0 .136c.411.622 1.241 1.75 2.366 2.717C5.176 11.758 6.527 12.5 8 12.5c1.473 0 2.825-.742 3.955-1.715 1.124-.967 1.954-2.096 2.366-2.717a.12.12 0 0 0 0-.136c-.412-.621-1.242-1.75-2.366-2.717C10.824 4.242 9.473 3.5 8 3.5c-1.473 0-2.825.742-3.955 1.715-1.124.967-1.954 2.096-2.366 2.717ZM8 10a2 2 0 1 1-.001-3.999A2 2 0 0 1 8 10Z"/></svg>
<svg style="position:absolute;left:1307px;top:533px" width="20" height="20" viewBox="0 0 16 16" fill="#59636e"><path d="M5 5.372v.878c0 .414.336.75.75.75h4.5a.75.75 0 0 0 .75-.75v-.878a2.25 2.25 0 1 1 1.5 0v.878a2.25 2.25 0 0 1-2.25 2.25h-1.5v2.128a2.251 2.251 0 1 1-1.5 0V8.5h-1.5A2.25 2.25 0 0 1 3.5 6.25v-.878a2.25 2.25 0 1 1 1.5 0ZM5 3.25a.75.75 0 1 0-1.5 0 .75.75 0 0 0 1.5 0Zm6.75.75a.75.75 0 1 0 0-1.5.75.75 0 0 0 0 1.5Zm-3 8.75a.75.75 0 1 0-1.5 0 .75.75 0 0 0 1.5 0Z"/></svg>
<div style="position:absolute;left:1307px;top:575px;width:370px;height:1px;background:#d1d9e0"></div>
<div style="position:absolute;left:1307.5px;top:689.5px;width:136px;height:1.2px;background:#0969da"></div>
<div style="position:absolute;left:1307px;top:711px;width:370px;height:1px;background:#d1d9e0"></div>
<div style="position:absolute;left:1307.5px;top:825.5px;width:169.5px;height:1.2px;background:#0969da"></div>
<div style="position:absolute;left:1307px;top:847px;width:370px;height:1px;background:#d1d9e0"></div>
<div style="position:absolute;left:1307px;top:918px;width:370px;height:10px;border-radius:5px;overflow:hidden;background:#d6dde4">
<div style="position:absolute;left:0;top:0;width:179.4px;height:10px;background:#3572A5"></div>
<div style="position:absolute;left:182px;top:0;width:89.4px;height:10px;background:#f1e05a"></div>
<div style="position:absolute;left:273px;top:0;width:50px;height:10px;background:#e34c26"></div>
<div style="position:absolute;left:326.1px;top:0;width:27.8px;height:10px;background:#663399"></div>
<div style="position:absolute;left:356.9px;top:0;width:5px;height:10px;background:#384d54"></div>
<div style="position:absolute;left:365.1px;top:0;width:1.8px;height:10px;background:#7e858d"></div>
</div>
<div style="position:absolute;left:1312px;top:944.2px;width:10px;height:10px;border-radius:50%;background:#3572A5"></div>
<div style="position:absolute;left:1459.7px;top:944.2px;width:10px;height:10px;border-radius:50%;background:#f1e05a"></div>
<div style="position:absolute;left:1312px;top:972.1px;width:10px;height:10px;border-radius:50%;background:#e34c26"></div>
<div style="position:absolute;left:1452px;top:972.1px;width:10px;height:10px;border-radius:50%;background:#663399"></div>
<div style="position:absolute;left:1312px;top:999.7px;width:10px;height:10px;border-radius:50%;background:#384d54"></div>
<div style="position:absolute;left:1473px;top:999.7px;width:10px;height:10px;border-radius:50%;background:#7e858d"></div>
<div style="position:absolute;left:1312px;top:1027.4px;width:10px;height:10px;border-radius:50%;background:#89e051"></div>
<div class="t" id="t0" style="left:132.50px;top:37.18px;font-size:17.5px;font-weight:400;color:#1f2328;transform:scaleX(1.0121);transform-origin:0 0;">ed-bradley</div>
<div class="t" id="t1" style="left:252.00px;top:37.18px;font-size:17.5px;-webkit-text-stroke:0.438px #1f2328;color:#1f2328;transform:scaleX(1.0114);transform-origin:0 0;">cdx-web-scan</div>
<div class="t" id="t2" style="left:1121.80px;top:36.68px;font-size:17.5px;font-weight:400;color:#59636e;transform:scaleX(0.9406);transform-origin:0 0;">Type</div>
<div class="t" id="t3" style="left:1168.50px;top:38.15px;font-size:14px;font-weight:400;color:#59636e;transform:scaleX(1.2000);transform-origin:0 0;">/</div>
<div class="t" id="t4" style="left:1187.90px;top:36.68px;font-size:17.5px;font-weight:400;color:#59636e;transform:scaleX(0.9669);transform-origin:0 0;">to search</div>
<div class="t" id="t5" style="left:60.30px;top:97.18px;font-size:17.5px;font-weight:700;color:#1f2328;transform:scaleX(0.9303);transform-origin:0 0;">Code</div>
<div class="t" id="t6" style="left:162.20px;top:97.18px;font-size:17.5px;font-weight:400;color:#1f2328;transform:scaleX(0.8937);transform-origin:0 0;">Issues</div>
<div class="t" id="t7" style="left:271.00px;top:97.18px;font-size:17.5px;font-weight:400;color:#1f2328;transform:scaleX(0.9607);transform-origin:0 0;">Pull requests</div>
<div class="t" id="t8" style="left:431.50px;top:97.18px;font-size:17.5px;font-weight:400;color:#1f2328;transform:scaleX(0.9758);transform-origin:0 0;">Actions</div>
<div class="t" id="t9" style="left:550.00px;top:97.18px;font-size:17.5px;font-weight:400;color:#1f2328;transform:scaleX(0.9602);transform-origin:0 0;">Projects</div>
<div class="t" id="t10" style="left:672.90px;top:97.18px;font-size:17.5px;font-weight:400;color:#1f2328;">Wiki</div>
<div class="t" id="t11" style="left:768.60px;top:97.18px;font-size:17.5px;font-weight:400;color:#1f2328;transform:scaleX(0.9602);transform-origin:0 0;">Security</div>
<div class="t" id="t12" style="left:891.80px;top:97.18px;font-size:17.5px;font-weight:400;color:#1f2328;transform:scaleX(0.9882);transform-origin:0 0;">Insights</div>
<div class="t" id="t13" style="left:1013.90px;top:97.18px;font-size:17.5px;font-weight:400;color:#1f2328;transform:scaleX(0.9773);transform-origin:0 0;">Settings</div>
<div class="t" id="t14" style="left:197.90px;top:161.53px;font-size:25px;font-weight:400;color:#1f2328;transform:scaleX(1.0069);transform-origin:0 0;">cdx-web-scan</div>
<div class="t" id="t15" style="left:373.00px;top:166.00px;font-size:15px;font-weight:400;color:#59636e;transform:scaleX(0.9961);transform-origin:0 0;">Public</div>
<div class="t" id="t16" style="left:1134.60px;top:164.30px;font-size:15px;-webkit-text-stroke:0.375px #1f2328;color:#1f2328;transform:scaleX(0.9360);transform-origin:0 0;">Pin</div>
<div class="t" id="t17" style="left:1218.00px;top:164.30px;font-size:15px;-webkit-text-stroke:0.375px #1f2328;color:#1f2328;">Watch</div>
<div class="t" id="t18" style="left:1279.00px;top:164.30px;font-size:15px;font-weight:400;color:#1f2328;transform:scaleX(0.9588);transform-origin:0 0;">0</div>
<div class="t" id="t19" style="left:1383.00px;top:164.30px;font-size:15px;-webkit-text-stroke:0.375px #1f2328;color:#1f2328;transform:scaleX(0.9600);transform-origin:0 0;">Fork</div>
<div class="t" id="t20" style="left:1427.50px;top:164.30px;font-size:15px;font-weight:400;color:#1f2328;transform:scaleX(0.9588);transform-origin:0 0;">0</div>
<div class="t" id="t21" style="left:1561.50px;top:164.30px;font-size:15px;-webkit-text-stroke:0.375px #1f2328;color:#1f2328;transform:scaleX(0.9631);transform-origin:0 0;">Star</div>
<div class="t" id="t22" style="left:1603.50px;top:164.30px;font-size:15px;font-weight:400;color:#1f2328;transform:scaleX(0.9588);transform-origin:0 0;">0</div>
<div class="t" id="t23" style="left:203.70px;top:255.18px;font-size:17.5px;-webkit-text-stroke:0.438px #1f2328;color:#1f2328;transform:scaleX(0.9964);transform-origin:0 0;">main</div>
<div class="t" id="t24" style="left:334.00px;top:255.18px;font-size:17.5px;-webkit-text-stroke:0.438px #1f2328;color:#1f2328;transform:scaleX(0.8732);transform-origin:0 0;">1</div>
<div class="t" id="t25" style="left:347.00px;top:255.18px;font-size:17.5px;font-weight:400;color:#59636e;transform:scaleX(0.9612);transform-origin:0 0;">Branch</div>
<div class="t" id="t26" style="left:443.00px;top:255.18px;font-size:17.5px;-webkit-text-stroke:0.438px #1f2328;color:#1f2328;transform:scaleX(1.0273);transform-origin:0 0;">0</div>
<div class="t" id="t27" style="left:457.50px;top:255.18px;font-size:17.5px;font-weight:400;color:#59636e;transform:scaleX(0.9413);transform-origin:0 0;">Tags</div>
<div class="t" id="t28" style="left:716.00px;top:256.38px;font-size:17.5px;font-weight:400;color:#59636e;transform:scaleX(1.0136);transform-origin:0 0;">Go to file</div>
<div class="t" id="t29" style="left:930.60px;top:256.50px;font-size:15px;font-weight:400;color:#1f2328;transform:scaleX(1.2000);transform-origin:0 0;font-family:"Liberation Mono",monospace;">t</div>
<div class="t" id="t30" style="left:981.00px;top:255.38px;font-size:17.5px;-webkit-text-stroke:0.438px #1f2328;color:#1f2328;transform:scaleX(1.0535);transform-origin:0 0;">Add file</div>
<div class="t" id="t31" style="left:1189.50px;top:255.18px;font-size:17.5px;-webkit-text-stroke:0.438px #fff;color:#fff;transform:scaleX(0.9918);transform-origin:0 0;">Code</div>
<div class="t" id="t32" style="left:210.00px;top:328.88px;font-size:17.5px;-webkit-text-stroke:0.438px #1f2328;color:#1f2328;transform:scaleX(1.0362);transform-origin:0 0;">ed-bradley</div>
<div class="t" id="t33" style="left:305.80px;top:329.38px;font-size:17.5px;font-weight:400;color:#59636e;transform:scaleX(1.0080);transform-origin:0 0;">Add Docker deployment diagram</div>
<div class="t" id="t34" style="left:975.60px;top:329.10px;font-size:15px;font-weight:400;color:#59636e;transform:scaleX(0.9725);transform-origin:0 0;">e4d2466 · 2 hours ago</div>
<div class="t" id="t35" style="left:1169.00px;top:329.50px;font-size:15px;-webkit-text-stroke:0.375px #1f2328;color:#1f2328;transform:scaleX(1.0084);transform-origin:0 0;">27 Commits</div>
<div class="t" id="t36" style="left:211.20px;top:386.88px;font-size:17.5px;font-weight:400;color:#1f2328;transform:scaleX(0.9138);transform-origin:0 0;">cdx_web_scan</div>
<div class="t" id="t37" style="left:625.40px;top:386.88px;font-size:17.5px;font-weight:400;color:#59636e;transform:scaleX(0.9872);transform-origin:0 0;">Updated Docker depolyment for HTTPS (self-signed cert)</div>
<div class="t" id="t38" style="left:1182.40px;top:386.88px;font-size:17.5px;font-weight:400;color:#59636e;transform:scaleX(0.9700);transform-origin:0 0;">yesterday</div>
<div class="t" id="t39" style="left:211.20px;top:437.88px;font-size:17.5px;font-weight:400;color:#1f2328;">deploy</div>
<div class="t" id="t40" style="left:625.40px;top:437.88px;font-size:17.5px;font-weight:400;color:#59636e;transform:scaleX(0.9872);transform-origin:0 0;">Updated Docker depolyment for HTTPS (self-signed cert)</div>
<div class="t" id="t41" style="left:1182.40px;top:437.88px;font-size:17.5px;font-weight:400;color:#59636e;transform:scaleX(0.9700);transform-origin:0 0;">yesterday</div>
<div class="t" id="t42" style="left:211.20px;top:488.88px;font-size:17.5px;font-weight:400;color:#1f2328;transform:scaleX(0.9576);transform-origin:0 0;">docs</div>
<div class="t" id="t43" style="left:625.40px;top:488.88px;font-size:17.5px;font-weight:400;color:#59636e;transform:scaleX(1.0088);transform-origin:0 0;">Add Docker deployment diagram</div>
<div class="t" id="t44" style="left:1164.60px;top:488.88px;font-size:17.5px;font-weight:400;color:#59636e;transform:scaleX(0.9888);transform-origin:0 0;">2 hours ago</div>
<div class="t" id="t45" style="left:211.20px;top:539.88px;font-size:17.5px;font-weight:400;color:#1f2328;transform:scaleX(1.0095);transform-origin:0 0;">migrations</div>
<div class="t" id="t46" style="left:625.40px;top:539.88px;font-size:17.5px;font-weight:400;color:#59636e;transform:scaleX(0.9873);transform-origin:0 0;">Initial scaffolding. Flask App runs.</div>
<div class="t" id="t47" style="left:1173.20px;top:539.88px;font-size:17.5px;font-weight:400;color:#59636e;transform:scaleX(0.9670);transform-origin:0 0;">3 days ago</div>
<div class="t" id="t48" style="left:211.20px;top:590.88px;font-size:17.5px;font-weight:400;color:#1f2328;transform:scaleX(0.9467);transform-origin:0 0;">tests</div>
<div class="t" id="t49" style="left:625.40px;top:590.88px;font-size:17.5px;font-weight:400;color:#59636e;transform:scaleX(0.9869);transform-origin:0 0;">Add initial test suite and update README file</div>
<div class="t" id="t50" style="left:1182.40px;top:590.88px;font-size:17.5px;font-weight:400;color:#59636e;transform:scaleX(0.9700);transform-origin:0 0;">yesterday</div>
<div class="t" id="t51" style="left:211.20px;top:641.88px;font-size:17.5px;font-weight:400;color:#1f2328;transform:scaleX(0.9920);transform-origin:0 0;">.dockerignore</div>
<div class="t" id="t52" style="left:625.40px;top:641.88px;font-size:17.5px;font-weight:400;color:#59636e;transform:scaleX(1.0128);transform-origin:0 0;">Add Docker deployment support</div>
<div class="t" id="t53" style="left:1173.20px;top:641.88px;font-size:17.5px;font-weight:400;color:#59636e;transform:scaleX(0.9670);transform-origin:0 0;">2 days ago</div>
<div class="t" id="t54" style="left:211.20px;top:692.88px;font-size:17.5px;font-weight:400;color:#1f2328;transform:scaleX(0.9601);transform-origin:0 0;">.env.example</div>
<div class="t" id="t55" style="left:625.40px;top:692.88px;font-size:17.5px;font-weight:400;color:#59636e;transform:scaleX(0.9917);transform-origin:0 0;">Updated Docker deployment (external persisted volume mo…</div>
<div class="t" id="t56" style="left:1182.40px;top:692.88px;font-size:17.5px;font-weight:400;color:#59636e;transform:scaleX(0.9700);transform-origin:0 0;">yesterday</div>
<div class="t" id="t57" style="left:211.20px;top:743.88px;font-size:17.5px;font-weight:400;color:#1f2328;transform:scaleX(0.9412);transform-origin:0 0;">.flaskenv</div>
<div class="t" id="t58" style="left:625.40px;top:743.88px;font-size:17.5px;font-weight:400;color:#59636e;transform:scaleX(0.9873);transform-origin:0 0;">Initial scaffolding. Flask App runs.</div>
<div class="t" id="t59" style="left:1173.20px;top:743.88px;font-size:17.5px;font-weight:400;color:#59636e;transform:scaleX(0.9670);transform-origin:0 0;">3 days ago</div>
<div class="t" id="t60" style="left:211.20px;top:794.88px;font-size:17.5px;font-weight:400;color:#1f2328;transform:scaleX(1.0181);transform-origin:0 0;">.gitignore</div>
<div class="t" id="t61" style="left:625.40px;top:794.88px;font-size:17.5px;font-weight:400;color:#59636e;transform:scaleX(0.9872);transform-origin:0 0;">Updated Docker depolyment for HTTPS (self-signed cert)</div>
<div class="t" id="t62" style="left:1182.40px;top:794.88px;font-size:17.5px;font-weight:400;color:#59636e;transform:scaleX(0.9700);transform-origin:0 0;">yesterday</div>
<div class="t" id="t63" style="left:211.20px;top:845.88px;font-size:17.5px;font-weight:400;color:#1f2328;transform:scaleX(1.0020);transform-origin:0 0;">.python-version</div>
<div class="t" id="t64" style="left:625.40px;top:845.88px;font-size:17.5px;font-weight:400;color:#59636e;transform:scaleX(0.9914);transform-origin:0 0;">Add UV support.</div>
<div class="t" id="t65" style="left:1173.20px;top:845.88px;font-size:17.5px;font-weight:400;color:#59636e;transform:scaleX(0.9670);transform-origin:0 0;">4 days ago</div>
<div class="t" id="t66" style="left:211.20px;top:896.88px;font-size:17.5px;font-weight:400;color:#1f2328;transform:scaleX(0.9734);transform-origin:0 0;">100.105.225.198+2-key.pem</div>
<div class="t" id="t67" style="left:625.40px;top:896.88px;font-size:17.5px;font-weight:400;color:#59636e;transform:scaleX(0.9872);transform-origin:0 0;">Updated Docker depolyment for HTTPS (self-signed cert)</div>
<div class="t" id="t68" style="left:1182.40px;top:896.88px;font-size:17.5px;font-weight:400;color:#59636e;transform:scaleX(0.9700);transform-origin:0 0;">yesterday</div>
<div class="t" id="t69" style="left:211.20px;top:947.88px;font-size:17.5px;font-weight:400;color:#1f2328;transform:scaleX(0.9624);transform-origin:0 0;">100.105.225.198+2.pem</div>
<div class="t" id="t70" style="left:625.40px;top:947.88px;font-size:17.5px;font-weight:400;color:#59636e;transform:scaleX(0.9872);transform-origin:0 0;">Updated Docker depolyment for HTTPS (self-signed cert)</div>
<div class="t" id="t71" style="left:1182.40px;top:947.88px;font-size:17.5px;font-weight:400;color:#59636e;transform:scaleX(0.9700);transform-origin:0 0;">yesterday</div>
<div class="t" id="t72" style="left:211.20px;top:998.88px;font-size:17.5px;font-weight:400;color:#1f2328;transform:scaleX(0.9818);transform-origin:0 0;">Dockerfile</div>
<div class="t" id="t73" style="left:625.40px;top:998.88px;font-size:17.5px;font-weight:400;color:#59636e;transform:scaleX(1.0128);transform-origin:0 0;">Add Docker deployment support</div>
<div class="t" id="t74" style="left:1173.20px;top:998.88px;font-size:17.5px;font-weight:400;color:#59636e;transform:scaleX(0.9670);transform-origin:0 0;">2 days ago</div>
<div class="t" id="t75" style="left:211.20px;top:1049.88px;font-size:17.5px;font-weight:400;color:#1f2328;">README.md</div>
<div class="t" id="t76" style="left:625.40px;top:1049.88px;font-size:17.5px;font-weight:400;color:#59636e;transform:scaleX(0.9869);transform-origin:0 0;">Add initial test suite and update README file</div>
<div class="t" id="t77" style="left:1182.40px;top:1049.88px;font-size:17.5px;font-weight:400;color:#59636e;transform:scaleX(0.9700);transform-origin:0 0;">yesterday</div>
<div class="t" id="t78" style="left:1307.50px;top:254.47px;font-size:20px;-webkit-text-stroke:0.700px #1f2328;color:#1f2328;transform:scaleX(1.0657);transform-origin:0 0;">About</div>
<div class="t" id="t79" style="left:1306.50px;top:304.07px;font-size:20px;font-weight:400;color:#1f2328;transform:scaleX(0.9912);transform-origin:0 0;">Internal Intake &amp; Scan Application (PWA)</div>
<div class="t" id="t80" style="left:1342.60px;top:353.98px;font-size:17.5px;font-weight:400;color:#59636e;transform:scaleX(0.9311);transform-origin:0 0;">Readme</div>
<div class="t" id="t81" style="left:1342.60px;top:390.08px;font-size:17.5px;font-weight:400;color:#59636e;transform:scaleX(0.9590);transform-origin:0 0;">MIT license</div>
<div class="t" id="t82" style="left:1342.60px;top:426.18px;font-size:17.5px;font-weight:400;color:#59636e;transform:scaleX(1.0083);transform-origin:0 0;">Activity</div>
<div class="t" id="t83" style="left:1342.30px;top:462.48px;font-size:17.5px;-webkit-text-stroke:0.438px #59636e;color:#59636e;transform:scaleX(0.9862);transform-origin:0 0;">0</div>
<div class="t" id="t84" style="left:1356.70px;top:462.48px;font-size:17.5px;font-weight:400;color:#59636e;transform:scaleX(0.9331);transform-origin:0 0;">stars</div>
<div class="t" id="t85" style="left:1342.30px;top:498.98px;font-size:17.5px;-webkit-text-stroke:0.438px #59636e;color:#59636e;transform:scaleX(0.9862);transform-origin:0 0;">0</div>
<div class="t" id="t86" style="left:1356.70px;top:498.98px;font-size:17.5px;font-weight:400;color:#59636e;transform:scaleX(0.9974);transform-origin:0 0;">watching</div>
<div class="t" id="t87" style="left:1342.30px;top:535.18px;font-size:17.5px;-webkit-text-stroke:0.438px #59636e;color:#59636e;transform:scaleX(0.9862);transform-origin:0 0;">0</div>
<div class="t" id="t88" style="left:1356.70px;top:535.18px;font-size:17.5px;font-weight:400;color:#59636e;transform:scaleX(0.9858);transform-origin:0 0;">forks</div>
<div class="t" id="t89" style="left:1306.80px;top:601.87px;font-size:20px;-webkit-text-stroke:0.700px #1f2328;color:#1f2328;transform:scaleX(0.9054);transform-origin:0 0;">Releases</div>
<div class="t" id="t90" style="left:1306.30px;top:650.20px;font-size:15px;font-weight:400;color:#59636e;transform:scaleX(0.9768);transform-origin:0 0;">No releases published</div>
<div class="t" id="t91" style="left:1307.50px;top:672.90px;font-size:15px;font-weight:400;color:#0969da;transform:scaleX(0.9538);transform-origin:0 0;">Create a new release</div>
<div class="t" id="t92" style="left:1306.20px;top:737.47px;font-size:20px;-webkit-text-stroke:0.700px #1f2328;color:#1f2328;transform:scaleX(0.9369);transform-origin:0 0;">Packages</div>
<div class="t" id="t93" style="left:1307.50px;top:786.10px;font-size:15px;font-weight:400;color:#59636e;transform:scaleX(0.9843);transform-origin:0 0;">No packages published</div>
<div class="t" id="t94" style="left:1306.30px;top:808.80px;font-size:15px;font-weight:400;color:#0969da;transform:scaleX(0.9868);transform-origin:0 0;">Publish your first package</div>
<div class="t" id="t95" style="left:1306.20px;top:874.07px;font-size:20px;-webkit-text-stroke:0.700px #1f2328;color:#1f2328;transform:scaleX(0.9800);transform-origin:0 0;">Languages</div>
<div class="t" id="t96" style="left:1337.70px;top:942.30px;font-size:15px;-webkit-text-stroke:0.375px #1f2328;color:#1f2328;transform:scaleX(1.0128);transform-origin:0 0;">Python</div>
<div class="t" id="t97" style="left:1391.00px;top:942.30px;font-size:15px;font-weight:400;color:#59636e;transform:scaleX(0.9119);transform-origin:0 0;">50.5%</div>
<div class="t" id="t98" style="left:1484.80px;top:942.30px;font-size:15px;-webkit-text-stroke:0.375px #1f2328;color:#1f2328;transform:scaleX(0.9667);transform-origin:0 0;">JavaScript</div>
<div class="t" id="t99" style="left:1558.50px;top:942.30px;font-size:15px;font-weight:400;color:#59636e;transform:scaleX(0.9119);transform-origin:0 0;">25.1%</div>
<div class="t" id="t100" style="left:1337.70px;top:970.20px;font-size:15px;-webkit-text-stroke:0.375px #1f2328;color:#1f2328;transform:scaleX(0.9622);transform-origin:0 0;">HTML</div>
<div class="t" id="t101" style="left:1383.90px;top:970.20px;font-size:15px;font-weight:400;color:#59636e;transform:scaleX(0.8955);transform-origin:0 0;">14.0%</div>
<div class="t" id="t102" style="left:1477.50px;top:970.20px;font-size:15px;-webkit-text-stroke:0.375px #1f2328;color:#1f2328;transform:scaleX(0.8000);transform-origin:0 0;">CSS</div>
<div class="t" id="t103" style="left:1508.50px;top:970.20px;font-size:15px;font-weight:400;color:#59636e;transform:scaleX(0.8917);transform-origin:0 0;">8.0%</div>
<div class="t" id="t104" style="left:1337.70px;top:997.80px;font-size:15px;-webkit-text-stroke:0.375px #1f2328;color:#1f2328;transform:scaleX(1.0212);transform-origin:0 0;">Dockerfile</div>
<div class="t" id="t105" style="left:1412.50px;top:997.80px;font-size:15px;font-weight:400;color:#59636e;transform:scaleX(0.8800);transform-origin:0 0;">1.6%</div>
<div class="t" id="t106" style="left:1498.60px;top:997.80px;font-size:15px;-webkit-text-stroke:0.375px #1f2328;color:#1f2328;transform:scaleX(0.9922);transform-origin:0 0;">Mako</div>
<div class="t" id="t107" style="left:1541.40px;top:997.80px;font-size:15px;font-weight:400;color:#59636e;transform:scaleX(0.8947);transform-origin:0 0;">0.7%</div>
<div class="t" id="t108" style="left:1337.70px;top:1025.50px;font-size:15px;-webkit-text-stroke:0.375px #1f2328;color:#1f2328;transform:scaleX(0.9383);transform-origin:0 0;">Shell</div>
<div class="t" id="t109" style="left:1375.40px;top:1025.50px;font-size:15px;font-weight:400;color:#59636e;transform:scaleX(0.8888);transform-origin:0 0;">0.1%</div>
</body></html>
